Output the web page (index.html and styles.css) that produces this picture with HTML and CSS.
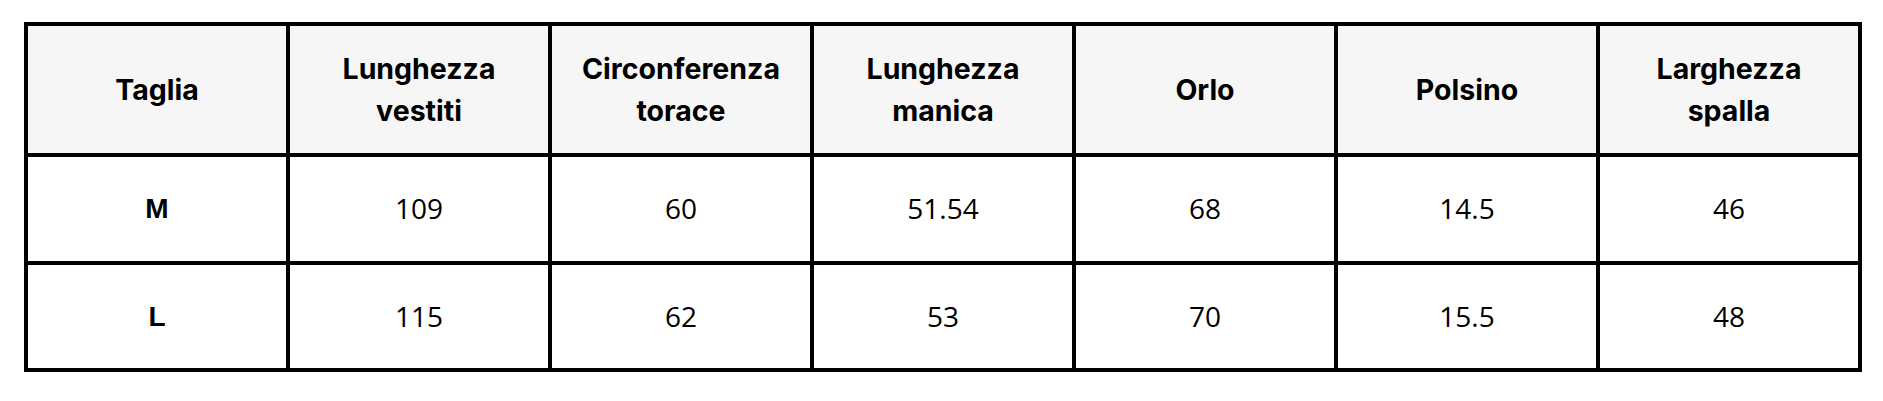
FILE: index.html
```html
<!DOCTYPE html>
<html lang="it">
<head>
<meta charset="utf-8">
<title>Tabella taglie</title>
<link rel="stylesheet" href="styles.css">
</head>
<body>
<table class="size-table">
  <thead>
    <tr>
      <th>Taglia</th>
      <th>Lunghezza<br>vestiti</th>
      <th>Circonferenza<br>torace</th>
      <th>Lunghezza<br>manica</th>
      <th>Orlo</th>
      <th>Polsino</th>
      <th>Larghezza<br>spalla</th>
    </tr>
  </thead>
  <tbody>
    <tr class="row-m">
      <td class="size">M</td>
      <td>109</td>
      <td>60</td>
      <td>51.54</td>
      <td>68</td>
      <td>14.5</td>
      <td>46</td>
    </tr>
    <tr class="row-l">
      <td class="size">L</td>
      <td>115</td>
      <td>62</td>
      <td>53</td>
      <td>70</td>
      <td>15.5</td>
      <td>48</td>
    </tr>
  </tbody>
</table>
</body>
</html>
```

FILE: styles.css
```css
html, body {
  margin: 0;
  padding: 0;
  background: #ffffff;
}

body {
  padding: 22px 0 0 24px;
}

.size-table {
  border-collapse: separate;
  border-spacing: 4px;
  background: #000000;
  table-layout: fixed;
  width: 1838px;
}

.size-table th,
.size-table td {
  width: 258px;
  padding: 0;
  text-align: center;
  vertical-align: middle;
  color: #000000;
  font-size: 28px;
  font-variant-ligatures: none;
}

.size-table th {
  height: 127px;
  background: #f6f6f6;
  font-family: "Inter", "Liberation Sans", sans-serif;
  font-size: 28.5px;
  font-weight: 700;
  line-height: 42px;
}

.size-table td {
  background: #ffffff;
  font-family: "Open Sans", "Liberation Sans", sans-serif;
  font-weight: 400;
  line-height: 1.2;
}

.row-m td {
  height: 104px;
}

.row-l td {
  height: 103px;
}

.size-table td.size {
  font-family: "Liberation Sans", Arial, sans-serif;
  font-weight: 700;
}
```
